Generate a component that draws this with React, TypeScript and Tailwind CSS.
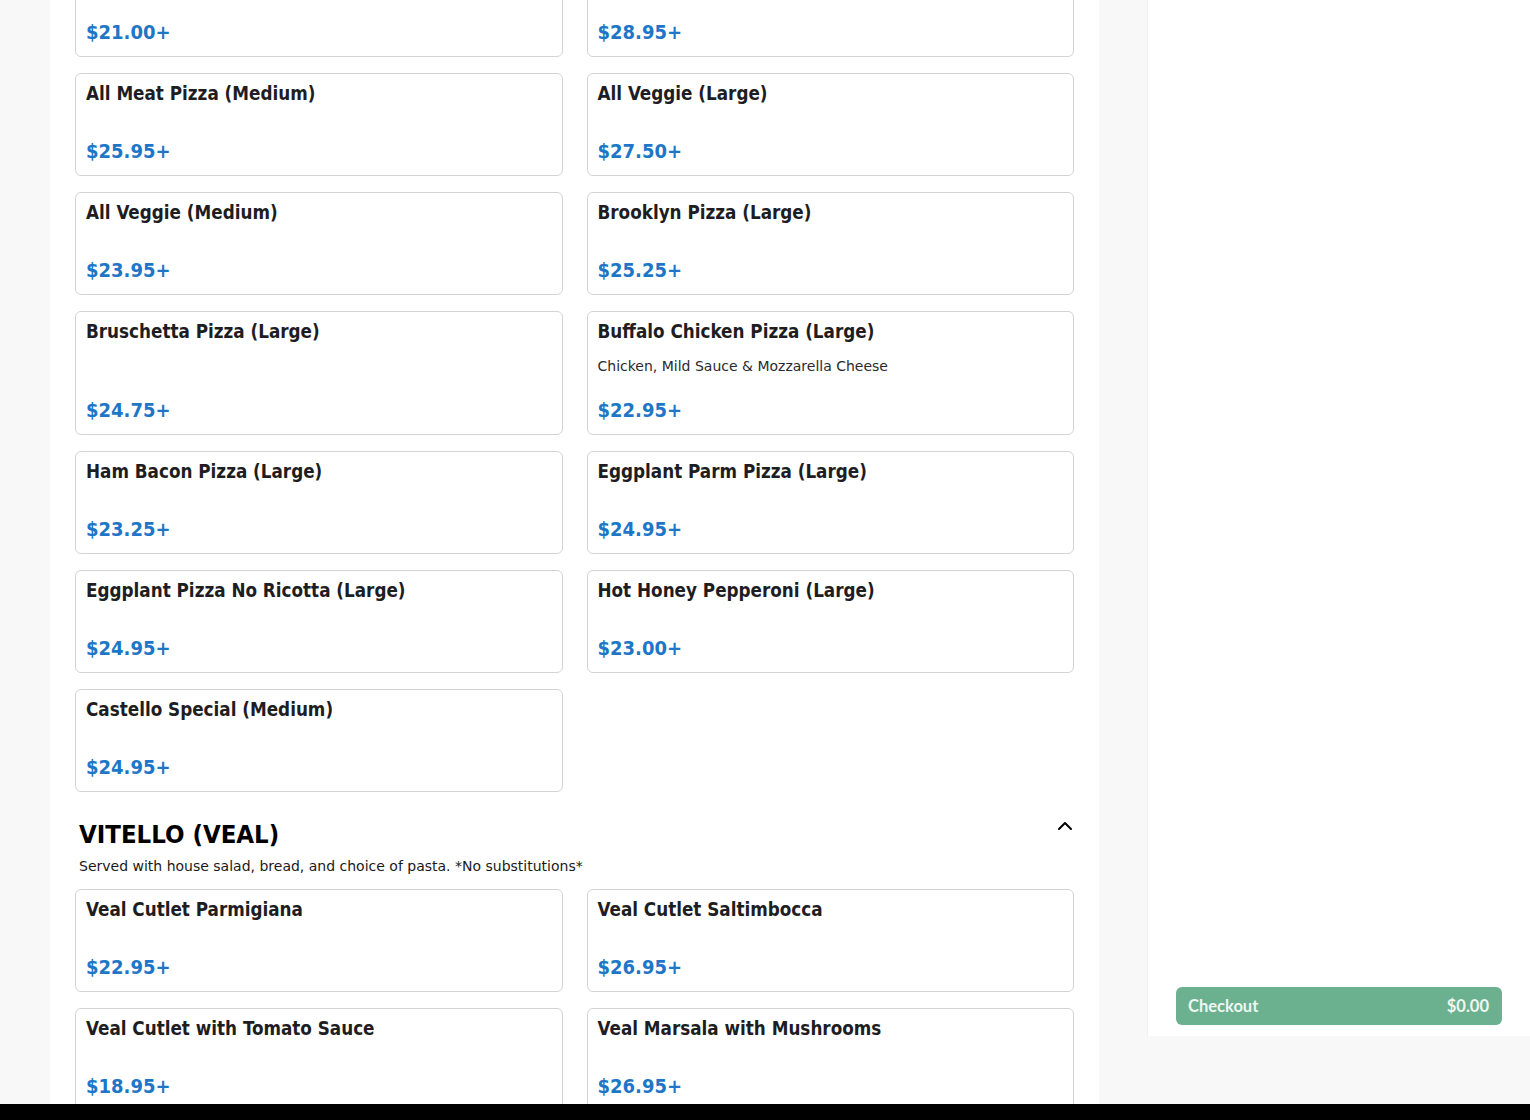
import { ChevronUp } from "lucide-react";

interface MenuItem {
  name: string;
  price: string;
  description?: string;
}

const pizzas: MenuItem[] = [
  { name: "Margherita Pizza (Medium)", price: "$21.00+" },
  { name: "All Meat Pizza (Large)", price: "$28.95+" },
  { name: "All Meat Pizza (Medium)", price: "$25.95+" },
  { name: "All Veggie (Large)", price: "$27.50+" },
  { name: "All Veggie (Medium)", price: "$23.95+" },
  { name: "Brooklyn Pizza (Large)", price: "$25.25+" },
  { name: "Bruschetta Pizza (Large)", price: "$24.75+" },
  {
    name: "Buffalo Chicken Pizza (Large)",
    price: "$22.95+",
    description: "Chicken, Mild Sauce & Mozzarella Cheese",
  },
  { name: "Ham Bacon Pizza (Large)", price: "$23.25+" },
  { name: "Eggplant Parm Pizza (Large)", price: "$24.95+" },
  { name: "Eggplant Pizza No Ricotta (Large)", price: "$24.95+" },
  { name: "Hot Honey Pepperoni (Large)", price: "$23.00+" },
  { name: "Castello Special (Medium)", price: "$24.95+" },
];

const veal: MenuItem[] = [
  { name: "Veal Cutlet Parmigiana", price: "$22.95+" },
  { name: "Veal Cutlet Saltimbocca", price: "$26.95+" },
  { name: "Veal Cutlet with Tomato Sauce", price: "$18.95+" },
  { name: "Veal Marsala with Mushrooms", price: "$26.95+" },
];

const condensed = { fontFamily: '"DejaVu Sans Condensed", "DejaVu Sans", sans-serif', fontStretch: "condensed" };

function ItemCard({ item }: { item: MenuItem }) {
  return (
    <div className="flex flex-col rounded-[6px] border border-[#d3d3d6] bg-white px-[10px] pt-[10px] pb-[11px]">
      <h4 className="pb-[14px] text-[18.7px] leading-[20px] font-bold text-[#1d1d22]" style={condensed}>
        {item.name}
      </h4>
      {item.description && (
        <p className="text-[14px] leading-[21px] text-[#2a2a2e]">{item.description}</p>
      )}
      <p className="mt-auto pt-[20px] text-[20px] leading-[26px] font-bold text-[#1f76c7]" style={condensed}>
        {item.price}
      </p>
    </div>
  );
}

export default function App() {
  return (
    <div
      className="flex h-[1120px] flex-col overflow-hidden bg-[#f8f8f8]"
      style={{ fontFamily: '"DejaVu Sans", sans-serif' }}
    >
      <div className="flex h-[1104px] overflow-hidden">
        <main className="ml-[50px] w-[1049px] shrink-0 overflow-hidden bg-white px-[25px]">
          <div className="-mt-[46px]">
            <div className="grid grid-cols-2 gap-x-[24px] gap-y-[16px]">
              {pizzas.map((item) => (
                <ItemCard key={item.name} item={item} />
              ))}
            </div>

            <section className="mt-[26px]">
              <div className="flex items-start justify-between px-[4px]">
                <h2 className="text-[25.5px] leading-[32px] font-bold text-black" style={condensed}>
                  VITELLO (VEAL)
                </h2>
                <ChevronUp size={24} strokeWidth={2} className="-mr-[7px] -mt-[4px] text-black" />
              </div>
              <p className="mt-[6px] px-[4px] text-[14px] leading-[20px] text-[#1a1a1a]">
                Served with house salad, bread, and choice of pasta. *No substitutions*
              </p>
              <div className="mt-[13px] grid grid-cols-2 gap-x-[24px] gap-y-[16px]">
                {veal.map((item) => (
                  <ItemCard key={item.name} item={item} />
                ))}
              </div>
            </section>
          </div>
        </main>

        <aside className="ml-[48px] flex h-[1036px] flex-1 flex-col justify-end border-l border-[#f0f0f0] bg-white pr-[28px] pb-[11px] pl-[28px]">
          <button
            className="flex h-[38px] w-full items-center justify-between rounded-[6px] bg-[#6bb190] pr-[13px] pl-[12px] text-[16.5px] font-bold text-[#eef7f2]"
            style={{ fontFamily: "Lato, sans-serif" }}
          >
            <span>Checkout</span>
            <span>$0.00</span>
          </button>
        </aside>
      </div>
      <div className="h-[16px] bg-black" />
    </div>
  );
}
